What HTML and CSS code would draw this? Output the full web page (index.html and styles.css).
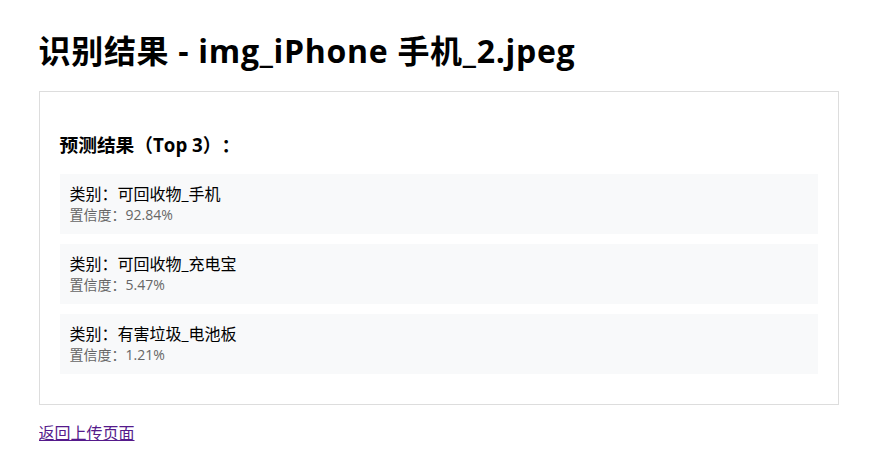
FILE: index.html
```html
<!DOCTYPE html>
<html lang="zh-CN">
<head>
<meta charset="utf-8">
<title>识别结果</title>
<link rel="stylesheet" href="styles.css">
</head>
<body>
<h1 class="title">识别结果 - img_iPhone 手机_2.jpeg</h1>
<div class="result-box">
  <h3 class="result-heading">预测结果（Top 3）：</h3>
  <div class="item">
    <div class="label">类别：可回收物_手机</div>
    <div class="conf">置信度：92.84%</div>
  </div>
  <div class="item">
    <div class="label">类别：可回收物_充电宝</div>
    <div class="conf">置信度：5.47%</div>
  </div>
  <div class="item">
    <div class="label">类别：有害垃圾_电池板</div>
    <div class="conf">置信度：1.21%</div>
  </div>
</div>
<a class="back" href="#">返回上传页面</a>
</body>
</html>
```
FILE: styles.css
```css
body {
  max-width: 800px;
  margin: 8px auto;
  font-family: "Open Sans", "Noto Sans CJK SC", sans-serif;
  color: #000;
  background: #fff;
  text-spacing-trim: space-all;
}
.title {
  font-size: 32px;
  line-height: 40px;
  font-weight: 700;
  letter-spacing: 0.7px;
  margin: 23px 0 20px;
}
.result-box {
  border: 1px solid #ddd;
  padding: 20px;
  margin-bottom: 17px;
}
.result-heading {
  font-size: 18.72px;
  line-height: 24px;
  font-weight: 700;
  margin: 21px 0 17px;
}
.item {
  background: #f8f9fa;
  padding: 10px;
  margin-bottom: 10px;
  height: 40px;
}
.label {
  font-size: 16px;
  line-height: 21px;
}
.conf {
  font-size: 14px;
  line-height: 19px;
  color: #666;
}
.back {
  font-size: 16px;
  line-height: 22px;
  color: #551a8b;
}
```
